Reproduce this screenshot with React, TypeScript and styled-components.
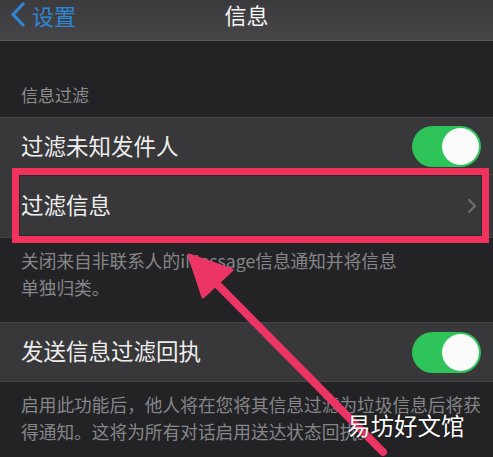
import React from "react";
import styled, { createGlobalStyle } from "styled-components";

const Global = createGlobalStyle`
  html, body { margin: 0; padding: 0; background: #232325; }
  body { width: 493px; height: 457px; overflow: hidden; font-family: "Noto Sans CJK SC", "Noto Sans", sans-serif; }
`;

const Screen = styled.div`
  position: relative;
  width: 493px;
  height: 457px;
  background: #232325;
  overflow: hidden;
  color: #f2f2f2;
`;

const NavBar = styled.div`
  height: 41px;
  background: linear-gradient(#3b3b3d, #464648);
  border-bottom: 1px solid #565658;
  display: grid;
  grid-template-columns: 1fr auto 1fr;
  align-items: start;
  padding-top: 2px;
  box-sizing: border-box;
`;

const Back = styled.div`
  display: flex;
  align-items: center;
  gap: 6px;
  padding-left: 10px;
  color: #2e86d6;
  font-size: 22px;
  line-height: 24px;
`;

const Title = styled.div`
  font-size: 22px;
  line-height: 24px;
  color: #f4f4f4;
`;

const SectionHeader = styled.div`
  padding: 44px 0 0 21px;
  height: 29px;
  font-size: 17px;
  line-height: 20px;
  color: #8e8e92;
`;

const Group = styled.div<{ $top?: number }>`
  margin-top: ${(p) => p.$top ?? 0}px;
  background: #38383a;
  border-top: 1px solid #444446;
  border-bottom: 1px solid #444446;
`;

const Row = styled.div<{ $h: number; $sep?: boolean }>`
  height: ${(p) => p.$h}px;
  display: flex;
  align-items: center;
  justify-content: space-between;
  padding: 0 12px 0 21px;
  box-sizing: border-box;
  position: relative;
  ${(p) =>
    p.$sep &&
    `&::after { content: ""; position: absolute; left: 21px; right: 0; bottom: 0; height: 1px; background: #48484a; }`}
`;

const Label = styled.span`
  font-size: 22.5px;
  line-height: 1;
  color: #ededed;
  margin-top: -3px;
`;

const Toggle = styled.div`
  width: 69px;
  height: 41px;
  border-radius: 21px;
  background: #2fc45a;
  position: relative;
  &::after {
    content: "";
    position: absolute;
    right: 2px;
    top: 2px;
    width: 37px;
    height: 37px;
    border-radius: 50%;
    background: #fbfbfb;
  }
`;

const Footer = styled.div<{ $h: number }>`
  height: ${(p) => p.$h}px;
  padding: 9px 8px 0 21px;
  box-sizing: border-box;
  font-size: 17.7px;
  line-height: 27px;
  color: #86868a;
`;

const Highlight = styled.div`
  position: absolute;
  left: 12px;
  top: 168px;
  width: 477px;
  height: 75px;
  box-sizing: border-box;
  border: 7px solid #f0325c;
  box-shadow: inset 0 0 0 1px #2a2a2c;
`;

const ArrowSvg = styled.svg`
  position: absolute;
  left: 0;
  top: 0;
  pointer-events: none;
`;

const Watermark = styled.div`
  position: absolute;
  left: 347px;
  top: 410px;
  font-size: 23.5px;
  line-height: 30px;
  color: #ffffff;
  text-shadow: 0 0 2px rgba(0,0,0,0.6);
`;

export default function App() {
  return (
    <>
      <Global />
      <Screen>
        <NavBar>
          <Back>
            <svg width="16" height="25" viewBox="0 0 16 25">
              <path d="M13 2 L3 12.5 L13 23" fill="none" stroke="#2e86d6" strokeWidth="3.2" strokeLinecap="round" strokeLinejoin="round" />
            </svg>
            <span>设置</span>
          </Back>
          <Title>信息</Title>
          <div />
        </NavBar>
        <SectionHeader>信息过滤</SectionHeader>
        <Group $top={3}>
          <Row $h={57} $sep>
            <Label>过滤未知发件人</Label>
            <Toggle />
          </Row>
          <Row $h={62}>
            <Label>过滤信息</Label>
            <svg width="10" height="16" viewBox="0 0 10 16" style={{ marginRight: 4 }}>
              <path d="M2 2 L8 8 L2 14" fill="none" stroke="#6d6d71" strokeWidth="2.2" strokeLinecap="round" strokeLinejoin="round" />
            </svg>
          </Row>
        </Group>
        <Footer $h={84}>
          关闭来自非联系人的iMessage信息通知并将信息
          <br />
          单独归类。
        </Footer>
        <Group>
          <Row $h={58}>
            <Label>发送信息过滤回执</Label>
            <Toggle />
          </Row>
        </Group>
        <Footer $h={80}>
          启用此功能后，他人将在您将其信息过滤为垃圾信息后将获得通知。这将为所有对话启用送达状态回执。
        </Footer>
        <Highlight />
        <ArrowSvg width="493" height="457" viewBox="0 0 493 457">
          <line x1="383" y1="452" x2="210" y2="277" stroke="#ec3564" strokeWidth="8" strokeLinecap="round" />
          <polygon points="189,255 232,270 203,297" fill="#ec3564" stroke="#ec3564" strokeWidth="3" strokeLinejoin="round" />
        </ArrowSvg>
        <Watermark>易坊好文馆</Watermark>
      </Screen>
    </>
  );
}
